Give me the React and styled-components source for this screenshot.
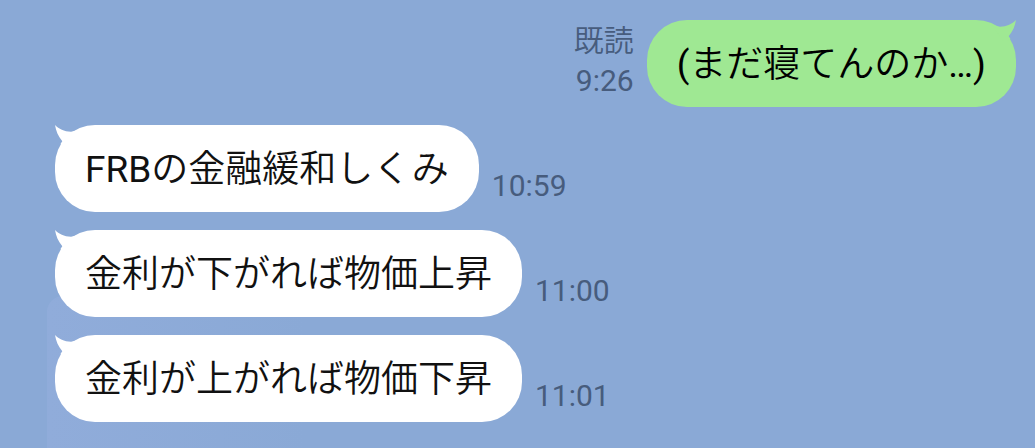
import React from 'react';
import styled, { createGlobalStyle } from 'styled-components';

const GlobalStyle = createGlobalStyle`
  body {
    margin: 0;
    min-height: 100vh;
    background: #8aa9d6;
    font-family: Roboto, 'Noto Sans CJK JP', sans-serif;
  }
`;

const StyledChat = styled.main`
  position: relative;
  isolation: isolate;
  display: flex;
  flex-direction: column;
  gap: 18px;
  padding: 20px 19px 26px 55px;

  /* faint light patch of the wallpaper */
  &::before {
    content: '';
    position: absolute;
    z-index: -1;
    left: 47px;
    bottom: 0;
    width: 260px;
    height: 152px;
    border-radius: 16px 16px 0 0;
    background: linear-gradient(to right, #90acda, #8aa9d6);
  }
`;

const StyledMessage = styled.div`
  display: flex;
  flex-direction: ${({ $mine }) => ($mine ? 'row-reverse' : 'row')};
  align-items: flex-end;
  gap: 13px;
`;

const StyledBubble = styled.div`
  position: relative;
  padding: 17px 30px 15px;
  border-radius: 40px;
  background: ${({ $mine }) => ($mine ? '#9fe893' : '#ffffff')};
  color: ${({ $mine }) => ($mine ? '#000000' : '#111111')};

  p {
    margin: 0;
    font-weight: 350;
    font-size: 37px;
    line-height: 55px;
  }
`;

// Roboto turns too thin at the weight of the Japanese text
const StyledLatin = styled.span`
  font-weight: 400;
`;

const StyledTail = styled.svg`
  position: absolute;
  top: 0;
  ${({ $mine }) => ($mine ? 'right: 0; transform: scaleX(-1);' : 'left: 0;')}
  width: 24px;
  height: 24px;
  fill: ${({ $mine }) => ($mine ? '#9fe893' : '#ffffff')};
`;

const StyledMeta = styled.div`
  display: flex;
  flex-direction: column;
  align-items: flex-end;
  padding-bottom: 6px;
  font-size: 30px;
  line-height: 40px;
  color: #475c7d;

  span {
    font-weight: 350;
  }
`;

const messages = [
  { id: 1, text: '(まだ寝てんのか…)', time: '9:26', mine: true },
  { id: 2, text: 'FRBの金融緩和しくみ', time: '10:59' },
  { id: 3, text: '金利が下がれば物価上昇', time: '11:00' },
  { id: 4, text: '金利が上がれば物価下昇', time: '11:01' },
];

function MessageText({ text }) {
  // odd parts are the captured latin runs
  const parts = text.split(/([\x20-\x7e…]+)/);
  return (
    <p>
      {parts.map((part, i) =>
        i % 2 ? <StyledLatin key={i}>{part}</StyledLatin> : part
      )}
    </p>
  );
}

function Message({ text, time, mine }) {
  return (
    <StyledMessage $mine={mine}>
      <StyledBubble $mine={mine}>
        <StyledTail $mine={mine} viewBox="0 0 24 24" aria-hidden="true">
          <path d="M0 0C4 4 9 6.5 16 6.7L24 5L12 22L5.5 19L7.3 16.3C3 11 1 6 0 0Z" />
        </StyledTail>
        <MessageText text={text} />
      </StyledBubble>
      <StyledMeta>
        {mine && <span>既読</span>}
        <time>{time}</time>
      </StyledMeta>
    </StyledMessage>
  );
}

function App() {
  return (
    <>
      <GlobalStyle />
      <StyledChat lang="ja">
        {messages.map((message) => (
          <Message key={message.id} {...message} />
        ))}
      </StyledChat>
    </>
  );
}

export default App;
